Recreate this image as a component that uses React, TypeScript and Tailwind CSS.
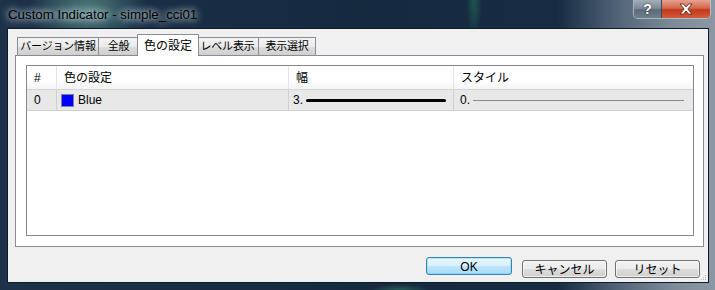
const tabs = ['バージョン情報', '全般', '色の設定', 'レベル表示', '表示選択']
const tabW = ['w-[82px]', 'w-[41px]', 'w-[62px]', 'w-[63px]', 'w-[58px]']

function Tab({ label, active, w }: { label: string; active?: boolean; w: string }) {
  if (active) {
    return (
      <div className={`${w} -mx-[2px] h-[22px] -mb-[1px] relative z-10 bg-white border border-b-0 border-[#898c95] flex items-center justify-center text-[12px] text-black`}>
        {label}
      </div>
    )
  }
  return (
    <div className={`${w} h-[18px] bg-[linear-gradient(#f3f3f3,#ebebeb_50%,#dddddd_51%,#cfcfcf)] border border-b-0 border-[#898c95] -ml-[1px] first:ml-0 flex items-center justify-center text-[11px] tracking-[-0.2px] text-black whitespace-nowrap`}>
      {label}
    </div>
  )
}

function Btn({ label, primary }: { label: string; primary?: boolean }) {
  return (
    <button
      className={
        primary
          ? 'w-[86px] h-[18px] rounded-[3px] border border-[#3c7fb1] bg-[linear-gradient(#eaf6fd,#d9f0fc_50%,#bee6fd_51%,#a7d9f5)] shadow-[inset_0_0_0_1px_#48d0ff55] text-[12px] text-black'
          : 'w-[85px] h-[18px] rounded-[3px] border border-[#707070] bg-[linear-gradient(#f2f2f2,#ebebeb_50%,#dddddd_51%,#cfcfcf)] shadow-[inset_0_0_0_1px_#ffffffaa] text-[12px] text-black'
      }
    >
      {label}
    </button>
  )
}

export default function App() {
  return (
    <div className="w-[715px] h-[290px] flex flex-col overflow-hidden font-['Liberation_Sans','Noto_Sans_CJK_JP',sans-serif] bg-[radial-gradient(ellipse_60px_40px_at_88px_10px,rgba(120,190,170,0.55),transparent),radial-gradient(ellipse_8px_40px_at_474px_0px,rgba(40,110,90,0.6),transparent),radial-gradient(ellipse_30px_6px_at_400px_290px,rgba(60,140,110,0.5),transparent),linear-gradient(90deg,#1d3249_0%,#15293f_50%,#172c42_78%,#4f6275_86%,#7d8b98_94%,#8b98a4_100%)]">
      {/* title bar */}
      <div className="h-[28px] flex shrink-0">
        <div className="pl-[8px] self-center pt-[1px] text-[13.3px] text-black [text-shadow:0_0_6px_#dfe7ec,0_0_10px_#c9d6dd]">
          Custom Indicator - simple_cci01
        </div>
        <div className="ml-auto mr-[4px] flex h-[19px] border border-t-0 border-[#c7d0d8]/70 rounded-b-[5px] overflow-hidden">
          <div className="w-[28px] h-full flex items-center justify-center bg-[linear-gradient(#a2adb8,#7d8c99_45%,#5b6a79_55%,#6d7e8c)] border-r border-[#3e4a57] text-white font-bold text-[14px] [text-shadow:0_0_2px_#222]">
            ?
          </div>
          <div className="w-[48px] h-full flex items-center justify-center bg-[linear-gradient(#e6a290,#d3674c_45%,#c2391c_55%,#d55a3c)]">
            <svg width="16" height="12" viewBox="0 0 16 12">
              <path d="M2 1h3.5L8 4l2.5-3H14L9.8 6 14 11h-3.5L8 8l-2.5 3H2l4.2-5z" fill="#fff" stroke="#5a1b0e" strokeWidth="0.8" />
            </svg>
          </div>
        </div>
      </div>

      {/* client area */}
      <div className="ml-[7px] mr-[6px] mb-[7px] flex-1 border border-[#0d1b2b] bg-[#f0f0f0] flex flex-col relative">
        <div className="pl-[9px] mt-[5px] h-[21px] flex items-end">
          {tabs.map((t, i) => (
            <Tab key={t} label={t} w={tabW[i]} active={i === 2} />
          ))}
        </div>

        <div className="ml-[7px] mr-[4px] h-[192px] border border-[#898c95] bg-white flex flex-col">
          <div className="ml-[10px] mr-[9px] mt-[9px] h-[171px] border border-[#828790] bg-white text-[12px] text-black">
            <div className="h-[24px] flex bg-[linear-gradient(#ffffff,#ffffff_60%,#f3f4f6)] border-b border-[#d5d5d5]">
              <div className="w-[30px] pl-[7px] flex items-center border-r border-[#e3e5e8]">#</div>
              <div className="w-[232px] pl-[7px] flex items-center border-r border-[#e3e5e8]">色の設定</div>
              <div className="w-[165px] pl-[7px] flex items-center border-r border-[#e3e5e8]">幅</div>
              <div className="flex-1 pl-[7px] flex items-center">スタイル</div>
            </div>
            <div className="h-[21px] flex bg-[#e8e8e8] border-b border-[#d0d0d0]">
              <div className="w-[30px] pl-[7px] flex items-center border-r border-[#d0d0d0]">0</div>
              <div className="w-[232px] pl-[4px] flex items-center gap-[4px] border-r border-[#d0d0d0]">
                <span className="w-[13px] h-[13px] bg-[#0000ff] border border-[#7f7f9f]" />
                Blue
              </div>
              <div className="w-[165px] pl-[4px] flex items-center gap-[3px] border-r border-[#d0d0d0]">
                3.
                <span className="w-[140px] h-[3px] bg-black rounded-full" />
              </div>
              <div className="flex-1 pl-[6px] pr-[9px] flex items-center gap-[3px]">
                0.
                <span className="flex-1 h-[1px] bg-[#8a8a8a]" />
              </div>
            </div>
          </div>
        </div>

        <div className="mt-[10px] flex justify-end pr-[8px]">
          <Btn label="OK" primary />
          <div className="ml-[10px]">
            <Btn label="キャンセル" />
          </div>
          <div className="ml-[8px]">
            <Btn label="リセット" />
          </div>
        </div>

        <svg className="absolute right-[1px] bottom-[1px]" width="6" height="6" viewBox="0 0 6 6">
          <rect x="4" y="0" width="1" height="1" fill="#b8b8b8" />
          <rect x="2" y="2" width="1" height="1" fill="#b8b8b8" />
          <rect x="4" y="2" width="1" height="1" fill="#b8b8b8" />
          <rect x="0" y="4" width="1" height="1" fill="#b8b8b8" />
          <rect x="2" y="4" width="1" height="1" fill="#b8b8b8" />
          <rect x="4" y="4" width="1" height="1" fill="#b8b8b8" />
        </svg>
      </div>
    </div>
  )
}
